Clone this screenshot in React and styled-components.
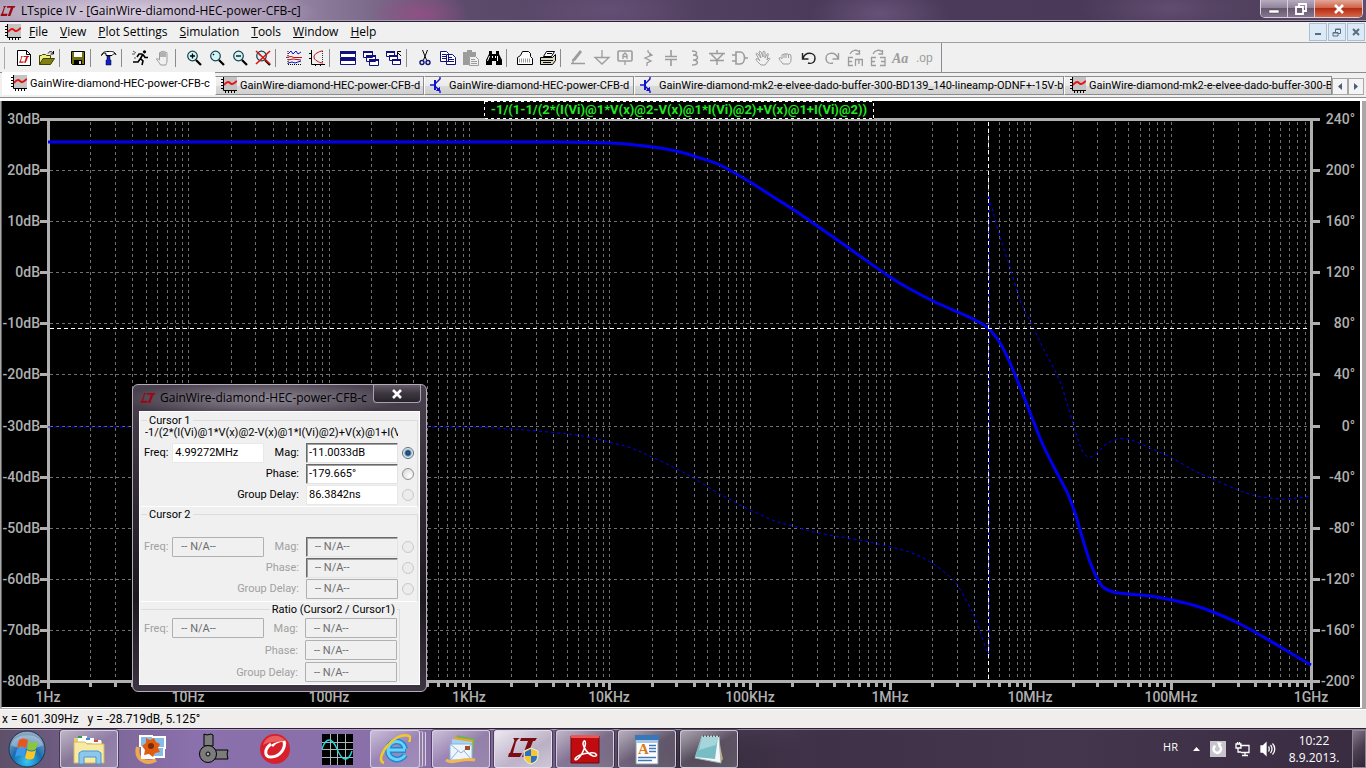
import React from 'react';
import styled, { createGlobalStyle, css } from 'styled-components';

const GlobalStyle = createGlobalStyle`
  * {
    box-sizing: border-box;
  }

  body {
    margin: 0;
    background: #000;
    color: #000;
    font-family: "Open Sans", "Noto Sans", sans-serif;
    font-size: 12px;
  }

  button, input {
    font: inherit;
    color: inherit;
  }
`

const Desktop = styled.div`
  display: flex;
  flex-direction: column;
  min-height: 100vh;
`

const TitleBar = styled.header`
  display: flex;
  align-items: center;
  height: 22px;
  padding: 0 3px 0 0;
  border-bottom: 1px solid #2b2033;
  box-shadow: inset 0 -1px 0 #a99bb2;
  background:
    radial-gradient(ellipse 190px 26px at 130px 12px, rgba(232, 222, 238, 0.8), transparent),
    radial-gradient(ellipse 50px 22px at 420px 14px, rgba(158, 76, 136, 0.7), transparent),
    radial-gradient(ellipse 90px 30px at 610px 10px, rgba(108, 86, 126, 0.6), transparent),
    radial-gradient(ellipse 70px 30px at 880px 14px, rgba(112, 92, 132, 0.7), transparent),
    radial-gradient(ellipse 90px 30px at 1170px 8px, rgba(112, 90, 128, 0.6), transparent),
    linear-gradient(90deg, #a493ae, #9c8aa9 20%, #5d4b6c 34%, #4c3a5a 60%, #4a3957 88%, #5f4d6a);
`

const WindowTitle = styled.h1`
  flex: 1;
  margin: 0 0 0 5px;
  font-size: 12px;
  font-weight: normal;
  line-height: 20px;
`

const CaptionButtons = styled.div`
  display: flex;
  align-self: flex-start;
  height: 18px;
  border: 1px solid #d8cfdd;
  border-top: 0;
  border-radius: 0 0 5px 5px;
  overflow: hidden;
`

const CaptionButton = styled.button`
  display: flex;
  align-items: center;
  justify-content: center;
  width: ${props => props.$close ? 47 : 27}px;
  padding: 0;
  border: 0;
  border-right: ${props => props.$close ? 0 : '1px solid #d8cfdd'};
  background: ${props => props.$close
    ? 'linear-gradient(#e2a697, #cf5f46 48%, #b42d12 50%, #d8664a)'
    : 'linear-gradient(#b7abbf, #8f8199 48%, #67576f 50%, #85768e)'};
`

const MenuBar = styled.nav`
  display: flex;
  align-items: center;
  height: 21px;
  padding: 0 1px 0 4px;
  border-bottom: 1px solid #a0a0a0;
  background: #f0f0f0;

  > svg {
    margin-right: 2px;
  }
`

const MenuItem = styled.button`
  padding: 0 6px;
  border: 0;
  background: none;
  font-size: 12px;
  line-height: 18px;

  &::first-letter {
    text-decoration: underline;
  }
`

const ChildButtons = styled.div`
  display: flex;
  gap: 1px;
  margin-left: auto;
`

const ChildButton = styled.button`
  display: flex;
  align-items: center;
  justify-content: center;
  width: 18px;
  height: 18px;
  padding: 0;
  border: 1px solid #a9bfd5;
  background: #dce9f6;
`

const Toolbar = styled.div`
  display: flex;
  align-items: center;
  height: 30px;
  padding-left: 4px;
  border-bottom: 1px solid #8c8c8c;
  background: #f0f0f0;
`

const ToolGroup = styled.div`
  display: flex;
  flex: none;
  align-items: center;

  & + & {
    padding-left: 7px;
    border-left: 1px solid #8c8c8c;
  }
`

const Grip = styled.div`
  width: 1px;
  height: 22px;
  margin-right: 8px;
  background: #a8a8a8;
`

const ToolButton = styled.button`
  width: 23px;
  height: 18px;
  padding: 1px 3px;
  border: 0;
  background: none;

  svg {
    display: block;
  }
`

const ToolbarEnd = styled.div`
  width: 1px;
  height: 29px;
  margin-left: 5px;
  background: #8c8c8c;
`

const TabBar = styled.div`
  display: flex;
  align-items: flex-end;
  height: 28px;
  padding: 0 2px 4px;
  border-bottom: 2px solid #fff;
  background: linear-gradient(#f0f0f0 24px, #8c8c8c 24px, #8c8c8c 25px, #fff 25px);
  font-family: Roboto, "Liberation Sans", sans-serif;
`

const Tab = styled.button`
  display: flex;
  flex: 0 ${props => props.$last ? 1 : 0} ${props => props.$width}px;
  align-items: center;
  gap: 3px;
  min-width: 0;
  height: 19px;
  padding: 0 0 0 4px;
  overflow: hidden;
  border: 1px solid #8c8c8c;
  border-left-color: #fff;
  background: linear-gradient(#f2f2f2, #ebebeb 50%, #dbdbdb 52%, #cfcfcf);
  font-size: 11px;
  white-space: nowrap;

  svg {
    flex: none;
  }

  ${props => props.$active && css`
    height: 23px;
    padding: 0 0 0 7px;
    border-color: #fff;
    background: #fff;
  `}
`

const TabScroll = styled.div`
  display: flex;
  margin-left: auto;
`

const ScrollButton = styled.button`
  width: 16px;
  height: 17px;
  padding: 0;
  border: 1px solid #a8a8a8;
  background: #f4f4f4;

  svg {
    display: block;
    margin: auto;
  }
`

const Workspace = styled.main`
  position: relative;
  display: flex;
  flex: 1;
  min-height: 600px;
  border: solid #a8a8a8;
  border-width: 0 4px 1px 1px;
`

const PlotPane = styled.div`
  display: flex;
  flex: 1;
  border: solid #fff;
  border-width: 0 2px 1px 0;
  border-left: 1px solid #606060;
  background: #000;
`

const Plot = styled.svg`
  display: block;
  flex: 1;
  min-width: 0;
  font-family: Roboto, "Liberation Sans", sans-serif;
`

const Dialog = styled.section`
  position: absolute;
  top: 283px;
  left: 131px;
  width: 295px;
  padding: 0 6px 6px;
  border: 1px solid #b4adb8;
  border-radius: 6px;
  background:
    radial-gradient(ellipse 140px 18px at 130px 14px, rgba(150, 143, 156, 0.9), transparent),
    linear-gradient(#4a424f, #2e2832 40%, #1c181f 70%, #3c3441);
  font-family: Roboto, "Liberation Sans", sans-serif;
  font-size: 11px;
`

const DialogTitle = styled.div`
  display: flex;
  height: 26px;
  padding-left: 1px;

  h2 {
    flex: 1;
    margin: 4px 0 0 4px;
    font: 12px/18px "Open Sans", "Noto Sans", sans-serif;
    white-space: nowrap;
  }

  > svg {
    margin-top: 7px;
  }
`

const DialogClose = styled.button`
  display: flex;
  align-items: center;
  justify-content: center;
  width: 48px;
  height: 18px;
  margin-right: -1px;
  padding: 0;
  border: 1px solid #aaa2ae;
  border-top: 0;
  border-radius: 0 0 4px 4px;
  background: linear-gradient(#655d69, #3c3640 50%, #28232b);
`

const DialogBody = styled.form`
  padding: 1px 1px 2px;
  border: 1px solid #fff;
  background: #f0f0f0;
`

const CursorGroup = styled.fieldset`
  min-width: 0;
  height: ${props => props.$height}px;
  margin: 0 ${props => props.$narrow ? 18 : 0}px 0 0;
  padding: 0;
  border: 1px solid #dcdcdc;
  border-left: 0;
  border-bottom-color: ${props => props.$narrow ? 'transparent' : '#fff'};

  legend {
    height: ${props => props.$narrow ? 15 : 14}px;
    margin-left: ${props => props.$narrow ? 'auto' : '6px'};
    margin-right: 2px;
    padding: 0 2px;
    line-height: 15px;
  }
`

const Expression = styled.div`
  width: 253px;
  height: 15px;
  margin-left: 4px;
  overflow: hidden;
  line-height: 11px;
  white-space: nowrap;
`

const Row = styled.div`
  display: flex;
  align-items: center;
  justify-content: flex-end;
  height: ${props => props.$narrow ? 22 : 21}px;
  padding-right: ${props => props.$narrow ? 0 : 3}px;
`

const Field = styled.label`
  display: flex;
  align-items: center;
  gap: ${props => props.$lead ? 4 : 7}px;
  margin: 0 ${props => props.$lead ? 'auto' : props.$narrow ? '2px' : '4px'} 0 ${props => props.$lead ? '3px' : '0'};
  color: ${props => props.$off ? '#a0a0a0' : '#000'};
`

const Value = styled.input`
  width: 92px;
  height: 20px;
  padding: 0 ${props => props.disabled ? 8 : 2}px;
  border: 1px solid ${props => props.disabled ? '#b0b0b0' : '#e8e8e8'};
  border-radius: 1px;
  background: ${props => props.disabled ? '#f0f0f0' : '#fff'};
  color: ${props => props.disabled ? '#6d6d6d' : '#000'};

  ${props => props.$sunken && css`
    border-color: #696969 #e3e3e3 #e3e3e3 #696969;
    box-shadow: inset 1px 1px 0 #a0a0a0;
  `}
`

const Radio = styled.input`
  appearance: none;
  flex: none;
  width: 12px;
  height: 12px;
  margin: 0;
  border: 1px solid #8e8f8f;
  border-radius: 50%;
  background: radial-gradient(circle at 70% 70%, #fff, #d4d4d4);

  &:disabled {
    border-color: #c8c8c8;
    background: #ececec;
  }

  &:checked {
    border-color: #5c6f80;
    background: radial-gradient(circle, #2d6a9c 0, #12406b 2px, #c9dbe8 4px, #f4f4f4 5px);
  }
`

const StatusBar = styled.footer`
  display: flex;
  align-items: center;
  height: 19px;
  padding-left: 2px;
  border-top: 1px solid #fff;
  background: #f0eeed;
  font-family: Roboto, "Liberation Sans", sans-serif;
  white-space: pre;
`

const Taskbar = styled.footer`
  display: flex;
  align-items: center;
  height: 40px;
  border-top: 1px solid #2a2030;
  background:
    radial-gradient(ellipse 110px 40px at 700px 30px, rgba(20, 14, 24, 0.4), transparent),
    linear-gradient(90deg, #5d5068, #7d6798 8%, #8a70ac 14%, #8a70a8 32%, #75618a 40%, #4d4058 50%, #3f3147 60%, #44364d 78%, #392b40 100%);
  box-shadow: inset 0 1px 0 rgba(220, 208, 228, 0.5);
  color: #fff;
`

const StartButton = styled.button`
  width: 60px;
  height: 38px;
  padding: 0 0 0 8px;
  border: 0;
  background: none;

  svg {
    display: block;
  }
`

const TaskButton = styled.button`
  display: flex;
  align-items: center;
  justify-content: center;
  width: 58px;
  height: 38px;
  margin-right: 4px;
  padding: 0;
  border: 1px solid transparent;
  border-radius: 3px;
  background: none;

  ${props => props.$open && css`
    border-color: rgba(235, 228, 240, 0.75);
    background: linear-gradient(150deg, rgba(255, 255, 255, 0.55), rgba(255, 255, 255, 0.15) 50%, rgba(255, 255, 255, 0.2));
    box-shadow: 0 0 0 1px rgba(30, 20, 40, 0.5);
  `}

  ${props => props.$stack && css`
    width: 50px;
    margin-right: 12px;
    box-shadow: 3px 0 0 -1px #8f7ba6, 4px 0 0 -1px #d8cfe0, 7px 0 0 -2px #8f7ba6, 8px 0 0 -2px #d8cfe0;
  `}

  ${props => props.$active && css`
    background: linear-gradient(150deg, rgba(255, 255, 255, 0.85), rgba(255, 255, 255, 0.5) 60%, rgba(255, 255, 255, 0.65));
  `}
`

const Tray = styled.div`
  display: flex;
  align-items: center;
  height: 100%;
  margin-left: auto;
`

const Language = styled.span`
  margin: 0 14px 5px 0;
  font-size: 11px;
`

const TrayIcons = styled.div`
  display: flex;
  align-items: center;
  gap: 9px;
`

const Clock = styled.time`
  width: 76px;
  font-size: 12px;
  line-height: 17px;
  text-align: center;
`

const ShowDesktop = styled.button`
  width: 14px;
  height: 38px;
  border: 1px solid #8f8396;
  background: linear-gradient(135deg, #85788c, #4a3e50 50%, #2f2535);
`

const logoPath = 'M5 0h7c-2 1-3 2-4 4L5 15h9l-2 4H0l1-4h1L6 4c1-2 0-3-1-4zM13 0h16l-2 3h-2l-6 16h-5l6-16h-8z';

const Logo = () => (
  <svg width="16" height="12" viewBox="-1 -2 31 23" fill="#9a0a10">
    <path d={logoPath}/>
  </svg>
)

const GraphIcon = () => (
  <svg width="17" height="17" viewBox="0 0 17 17">
    <path fill="#c4c4c4" d="M3 0h14v13H3z"/>
    <path stroke="#000" fill="none" d="M3.500 0v13.500H17M1 2.500h2M1 5.500h2M1 8.500h2M1 11.500h2M5.500 14v2M8.500 14v2M11.500 14v2M14.500 14v2"/>
    <path stroke="#e81010" strokeWidth="1.800" fill="none" d="M4 8c1-1 2-3 4-3s2 2 4 2 3-2 5-3"/>
  </svg>
)

const TransistorIcon = () => (
  <svg width="17" height="17" viewBox="0 0 17 17" stroke="#1010d0" fill="none">
    <path strokeWidth="2" d="M6 3v10"/>
    <path strokeWidth="1.400" d="M1 8h5M6 7l5-5V0M6 9l5 5v2"/>
    <path fill="#1010d0" d="M7.500 13.500h3v-3z"/>
  </svg>
)

const Lens = ({ children }) => (
  <>
    <circle cx="6.500" cy="6" r="4.800" fill="#d4f4f4" stroke="#104050" strokeWidth="1.200"/>
    <path stroke="#000" strokeWidth="2.200" d="M10 10l5 5"/>
    <path stroke="#000" strokeWidth="1.300" d={children}/>
  </>
)

const G = '#9c9c9c';
const N = '#10107c';

const tools = [
  [
    ['New schematic', <><path fill="#fff" stroke="#000" d="M1.500.500h9l4 4v11h-13z"/><path fill="none" stroke="#000" d="M10.500.500v4h4"/><g fill="#d01010" transform="translate(3 6) scale(.36)"><path d={logoPath}/></g></>],
    ['Open', <><path fill="#f0f080" stroke="#404000" d="M.500 14.500v-9h2l1-1h3l1 1h4v3"/><path fill="#808010" stroke="#404000" d="M.500 14.500l3.500-6h11.500l-4 6z"/><path fill="none" stroke="#000" d="M9 3.500c2-3 4-2 5.500 0M14.500 1v3h-3"/></>],
  ],
  [['Save', <><path fill="#707010" stroke="#000" d="M1.500 1.500h13v13h-12l-1-1z"/><path fill="#fff" d="M4 2h8v5H4z"/><path d="M4 10h8v5H4z"/><path fill="#ddd" d="M9 11h2v3H9z"/></>]],
  [['Control panel', <><path fill="#fff" stroke="#000" d="M.500 5.500c1-4 4-4 8-4 3 0 5 0 6.500 3l-2-1-2 2h-6v-2c-2-1-3 0-4.500 2z"/><path fill="#1020d0" stroke="#000" strokeWidth=".5" d="M6 6h3v4h1v5H5v-5h1z"/></>]],
  [
    ['Run', <><circle cx="12.500" cy="1.800" r="1.600"/><path fill="none" stroke="#000" strokeWidth="1.600" d="M11 4L8.500 8.500l2.500 2.500-1 4M8.500 8.500L6 12H1M10.500 4H7L5 7M11 4.500l2 3h3"/><path stroke="#555" d="M1 1l3 2M0 4h3M2 8h2"/></>],
    ['Halt', <path fill="none" stroke={G} d="M5.500 15c-1-3-4-5-4-6s2 0 3 1V3c0-1 1.500-1 1.500 0v4V2c0-1 2-1 2 0v5-5c0-1 2-1 2 0v5-4c0-1 2-1 2 0v8c0 2-1 3-1 4z"/>],
  ],
  [
    ['Zoom in', <Lens>M4 6h5M6.500 3.500v5</Lens>],
    ['Pan', <Lens>M4 5l1-1</Lens>],
    ['Zoom out', <Lens>M4 6h5</Lens>],
    ['Zoom full', <><Lens>M4 5l1-1</Lens><path stroke="#e01010" strokeWidth="1.600" d="M1 1l14 13M15 1L1 14"/></>],
  ],
  [
    ['Autorange', <><path stroke="#000" fill="none" strokeDasharray="1 1" d="M2 1v14M2 14.500h14"/><path stroke="#1010c0" fill="none" d="M2 4l3-3 2 3 3-3 2 3 3-2M2 13l4-1 3 1 6-2"/><path stroke="#c01010" fill="none" d="M0 7.500l5-1 3 1h8M2 10l5-1 8 1"/></>],
    ['Plot settings', <><path stroke="#000" fill="none" d="M2.500 0v14.500H16M0 3.500h2M0 8.500h2M6.500 14v2M11.500 14v2"/><path stroke="#c01010" fill="none" d="M14 1c-3 0-4 1-6 2-4 2-4 6 0 8 2 1 3 2 6 2"/><path stroke="#333" strokeDasharray="1 1" d="M13.500 1v12"/></>],
  ],
  [
    ['Tile windows', <><path fill="#fff" stroke={N} d="M.500 1.500h15v6H.500zM.500 8.500h15v6H.500z"/><path fill={N} d="M0 1h16v3H0zM0 8h16v3H0z"/></>],
    ['Cascade windows', <><path fill="#fff" stroke={N} d="M.500 1.500h9v6h-9zM3.500 5.500h9v6h-9zM6.500 9.500h9v6h-9z"/><path fill={N} d="M0 1h10v2H0zM3 5h10v2H3zM6 9h10v2H6z"/></>],
    ['Close windows', <><path fill="#fff" stroke={N} d="M.500 1.500h8v5h-8zM3.500 5.500h8v5h-8zM6.500 9.500h8v5h-8z"/><path fill={N} d="M0 1h9v2H0zM3 5h9v2H3zM6 9h9v2H6z"/><path fill="none" stroke="#000" d="M15 6l-4-4M11.500 5V1.500H15"/></>],
  ],
  [
    ['Cut', <><path stroke="#000" fill="none" d="M5.500 0l4 10M10.500 0l-4 10"/><g fill="none" stroke={N} strokeWidth="1.400"><circle cx="5" cy="12.500" r="2"/><circle cx="11" cy="12.500" r="2"/></g></>],
    ['Copy', <><path fill="#fff" stroke={N} d="M.500 1.500h6l2 2v8h-8zM6.500 4.500h6l3 3v7h-9z"/><path stroke={N} d="M2 4.500h4M2 6.500h4M2 8.500h4M8 7.500h4M8 9.500h6M8 11.500h6"/></>],
    ['Paste', <><path fill={G} d="M0 2h4V0h5v2h4v4H6v9H0z"/><path fill="#f0f0f0" stroke={G} d="M6.500 6.500h6l3 3v6h-9z"/><path stroke={G} d="M8 9.500h4M8 11.500h6M8 13.500h6"/></>],
    ['Find', <><path d="M3 1h3v3h4V1h3v3l3 6v5h-6v-4H6v4H0v-5l3-6z"/><path stroke="#fff" fill="none" d="M3.500 6l-2 5M11.500 6v5M6.500 6v2M9.500 6v2"/></>],
  ],
  [
    ['Print preview', <><path fill="#fff" stroke="#000" d="M.500 14.500v-7l3-2 2-4h6l2 2v3l2 2v6z"/><path stroke="#999" strokeWidth="4" strokeDasharray="1 1" d="M2 10.500h12"/></>],
    ['Print', <><path fill="#fff" stroke="#000" d="M3.500 6.500l3-5h8l-3 5z"/><path fill="#d8d8c0" stroke="#000" d="M.500 7.500h12l3-3v6l-3 4H.500z"/><path stroke="#000" d="M1 10.500h12M7 3.500h5M3 12.500h8"/></>],
  ],
  [
    ['Wire', <><path fill={G} d="M1 10L9 0l2 2-7 9z"/><path stroke={G} strokeWidth="1.500" d="M0 13.500h14M2 9v5"/></>],
    ['Ground', <path stroke={G} strokeWidth="1.300" fill="none" d="M8 0v7M1 7.500h14L8 14z"/>],
    ['Label net', <><rect x="1" y="1" width="14" height="10" rx="1" fill="none" stroke={G} strokeWidth="1.600"/><path stroke={G} strokeWidth="1.300" fill="none" d="M6 9V5l2-2 2 2v4M6 6.500h4M8 11v4"/></>],
    ['Resistor', <path stroke={G} strokeWidth="1.300" fill="none" d="M8 0v2l4 3-7 3 6 3-4 2v3M12 5H9"/>],
    ['Capacitor', <path stroke={G} strokeWidth="1.600" fill="none" d="M8 0v6M2 6.500h12M2 9.500h12M8 10v6"/>],
    ['Inductor', <path stroke={G} strokeWidth="1.500" fill="none" d="M6 1c6 0 6 4 1 4 6 0 6 5 0 5 6 0 6 5-1 5"/>],
    ['Diode', <path stroke={G} strokeWidth="1.500" fill="none" d="M8 0v3M8 11v4M0 3.500h16M2 4l6 6 6-6M1 10.500h14"/>],
    ['Component', <path stroke={G} strokeWidth="1.600" fill="none" d="M0 5h4M0 11h4M4 2h4c6 0 6 12 0 12H4zM12 8h4"/>],
    ['Move', <path fill="none" stroke={G} d="M6 15c-3-3-5-4-5-6 1-1 2 0 4 2L1 4c0-1 1-1 2 0l3 4-2-6c0-1 1-1 2 0l2 5V2c0-1 2-1 2 0v6l2-4c1-1 2 0 1 1l-1 5 2-2c1 0 1 1 0 2l-4 5z"/>],
    ['Drag', <path fill="none" stroke={G} d="M5 14c-2-3-4-4-4-6 1-1 2 0 3 1V5c0-1 2-1 2 0 0-2 2-2 2 0 0-2 2-2 2 0 1-1 3-1 3 1v4c0 2-1 3-2 4zM6 5v3M8 5v3M10.500 5v3"/>],
    ['Undo', <path fill="none" stroke="#222" strokeWidth="1.400" d="M1.500 3v6h6M2 8.500C4 1 14 2 14 8c0 5-4 6-7 5"/>],
    ['Redo', <path fill="none" stroke={G} strokeWidth="1.400" d="M14.500 3v6h-6M14 8.500C12 1 2 2 2 8c0 5 4 6 7 5"/>],
    ['Mirror', <path fill="none" stroke={G} strokeWidth="1.300" d="M3 4c2-4 7-5 9-2M12.500 0v4h-4M6 7.500H1.500v8H6M1.500 11.500H5M8.500 16V9.500H16M15.300 9v7M11.900 9.500V14"/>],
    ['Rotate', <path fill="none" stroke={G} strokeWidth="1.300" d="M3 4c2-4 7-5 9-2M12.500 0v4h-4M6 7.500H1.500v8H6M1.500 11.500H5M10 7.500h5v8h-5M11 11.500h4"/>],
    ['Text', <text x="-1" y="13" fontFamily="Liberation Serif, serif" fontSize="14" fontStyle="italic" fontWeight="bold" fill={G}>Aa</text>],
    ['SPICE directive', <text x="0" y="12" fontFamily="Liberation Sans, sans-serif" fontSize="12" fill={G}>.op</text>],
  ],
];

const tabs = [
  { name: 'GainWire-diamond-HEC-power-CFB-c', width: 213, active: true },
  { name: 'GainWire-diamond-HEC-power-CFB-d', width: 209 },
  { name: 'GainWire-diamond-HEC-power-CFB-d', width: 210, schematic: true },
  { name: 'GainWire-diamond-mk2-e-elvee-dado-buffer-300-BD139_140-lineamp-ODNF+-15V-b', width: 430, schematic: true },
  { name: 'GainWire-diamond-mk2-e-elvee-dado-buffer-300-BD', width: 268, last: true },
];

const AXIS = { left: 48, right: 1311, top: 119, bottom: 681 };
const decades = ['1Hz', '10Hz', '100Hz', '1KHz', '10KHz', '100KHz', '1MHz', '10MHz', '100MHz', '1GHz'];
const steps = Array.from({ length: 12 }, (_, i) => i);

const xAt = decade => Math.round(AXIS.left + decade * (AXIS.right - AXIS.left) / 9);
const yAt = step => Math.round(AXIS.top + step * (AXIS.bottom - AXIS.top) / 11);

const magnitude = [
  [48, 142], [300, 142], [500, 142], [560, 142], [609, 143], [635, 145], [660, 148], [680, 152],
  [700, 158], [720, 165], [750, 182], [775, 198], [800, 214], [850, 249], [890, 277], [910, 289], [935, 302],
  [960, 313], [975, 320], [988, 328], [1000, 343], [1010, 363], [1020, 387], [1031, 415], [1043, 445],
  [1057, 473], [1067, 492], [1075, 513], [1083, 540], [1090, 562], [1097, 578], [1103, 587], [1113, 592],
  [1128, 594], [1150, 596], [1172, 600], [1193, 605], [1213, 612], [1238, 623], [1260, 635], [1282, 648], [1311, 665],
];

const phaseLow = [
  [48, 427], [420, 427], [470, 427], [511, 429], [537, 431], [568, 434], [588, 437], [609, 442], [631, 448],
  [652, 457], [677, 469], [695, 479], [716, 492], [731, 500], [750, 510], [775, 521], [793, 526], [818, 533],
  [848, 538], [869, 542], [891, 547], [912, 553], [932, 563], [949, 576], [958, 586], [967, 602], [975, 618], [988, 655],
];

const phaseHigh = [
  [988, 197], [992, 208], [1000, 237], [1010, 267], [1020, 300], [1032, 325], [1043, 348], [1058, 377],
  [1067, 403], [1075, 430], [1082, 450], [1089, 457], [1097, 453], [1105, 445], [1115, 440], [1128, 439],
  [1150, 448], [1172, 458], [1193, 470], [1213, 479], [1238, 490], [1257, 496], [1282, 499], [1297, 498], [1311, 496],
];

// Catmull-Rom through the sample points
const smooth = points => points.slice(1).reduce((path, p, i) => {
  const a = points[Math.max(i - 1, 0)];
  const b = points[i];
  const c = points[Math.min(i + 2, points.length - 1)];
  return `${path}C${b[0] + (p[0] - a[0]) / 6},${b[1] + (p[1] - a[1]) / 6} ${p[0] - (c[0] - b[0]) / 6},${p[1] - (c[1] - b[1]) / 6} ${p[0]},${p[1]}`;
}, `M${points[0]}`);

const BodePlot = () => (
  <Plot viewBox="2 101 1358 606" role="img" aria-label="Gain and phase against frequency">
    <g stroke="#707070" strokeDasharray="3 3" shapeRendering="crispEdges">
      {decades.slice(0, -1).map((_, d) => [2, 3, 4, 5, 6, 7, 8, 9, 10].map(m => (
        <path key={`${d}-${m}`} d={`M${xAt(d + Math.log10(m))}.5 122V680`}/>
      )))}
      {steps.slice(1, -1).map(i => <path key={i} d={`M50 ${yAt(i)}.5H1310`}/>)}
    </g>
    <g stroke="#b0b0b0" fill="none" shapeRendering="crispEdges">
      <path strokeWidth="3" d="M40 119.500H1320M40 681.500H1320M48.500 119V689M1311.500 119V689"/>
      {steps.map(i => <path key={i} strokeWidth="3" d={`M40 ${yAt(i)}.5H48M1312 ${yAt(i)}.5H1320`}/>)}
      {decades.slice(0, -1).map((_, d) => [2, 3, 4, 5, 6, 7, 8, 9, 10].map(m => (
        <path key={`${d}-${m}`} strokeWidth="3" d={`M${xAt(d + Math.log10(m))}.5 682v${m === 10 ? 8 : 5}`}/>
      )))}
    </g>
    <g fill="#b0b0b0" fontSize="14" fontWeight="500">
      {steps.map(i => <text key={i} x="40" y={yAt(i) + 5} textAnchor="end">{30 - i * 10}dB</text>)}
      {steps.map(i => <text key={i} x="1355" y={yAt(i) + 5} textAnchor="end">{240 - i * 40}°</text>)}
      {decades.map((label, i) => <text key={label} x={xAt(i)} y="702" textAnchor="middle">{label}</text>)}
    </g>
    <g fill="none" stroke="#0000ff" strokeDasharray="3 3">
      <path d={smooth(phaseLow)}/>
      <path d={smooth(phaseHigh)}/>
      <path d="M989.500 197V655"/>
    </g>
    <path fill="none" stroke="#0000f0" strokeWidth="3" d={smooth(magnitude)}/>
    <path fill="none" stroke="#fff" strokeDasharray="4 3" shapeRendering="crispEdges" d="M50 328.500H1310M988.500 122V680"/>
    <rect x="484.500" y="101.500" width="389" height="17" fill="#000" stroke="#fff" strokeDasharray="3 3" shapeRendering="crispEdges"/>
    <text x="679" y="114" fill="#20e820" fontSize="13" fontWeight="700" textAnchor="middle">
      -1/(1-1/(2*(I(Vi)@1*V(x)@2-V(x)@1*I(Vi)@2)+V(x)@1+I(Vi)@2))
    </text>
  </Plot>
)

const CursorRow = ({ name, label, value = '-- N/A--', freq, sunken, off, radio = true, checked, radioOff }) => (
  <Row $narrow={!radio}>
    {freq && (
      <Field $lead $off={off}>Freq:<Value defaultValue={freq} disabled={off}/></Field>
    )}
    <Field $off={off} $narrow={!radio}>{label}:<Value defaultValue={value} disabled={off} $sunken={sunken}/></Field>
    {radio && (
      <Radio type="radio" name={name} aria-label={`${name} ${label}`} defaultChecked={checked} disabled={radioOff}/>
    )}
  </Row>
)

const CursorDialog = () => (
  <Dialog>
    <DialogTitle>
      <Logo/>
      <h2>GainWire-diamond-HEC-power-CFB-c</h2>
      <DialogClose aria-label="Close">
        <svg width="12" height="10" viewBox="0 0 12 10"><path stroke="#fff" strokeWidth="2.600" d="M2 1l8 8M10 1L2 9"/></svg>
      </DialogClose>
    </DialogTitle>
    <DialogBody>
      <CursorGroup $height={94}>
        <legend>Cursor 1</legend>
        <Expression>-1/(2*(I(Vi)@1*V(x)@2-V(x)@1*I(Vi)@2)+V(x)@1+I(Vi)</Expression>
        <CursorRow name="Cursor 1" label="Mag" freq="4.99272MHz" value="-11.0033dB" sunken checked/>
        <CursorRow name="Cursor 1" label="Phase" value="-179.665°" sunken/>
        <CursorRow name="Cursor 1" label="Group Delay" value="86.3842ns" radioOff/>
      </CursorGroup>
      <CursorGroup $height={95}>
        <legend>Cursor 2</legend>
        <Expression/>
        <CursorRow name="Cursor 2" label="Mag" freq="-- N/A--" sunken off radioOff/>
        <CursorRow name="Cursor 2" label="Phase" sunken off radioOff/>
        <CursorRow name="Cursor 2" label="Group Delay" off radioOff/>
      </CursorGroup>
      <CursorGroup $height={80} $narrow>
        <legend>Ratio (Cursor2 / Cursor1)</legend>
        <CursorRow label="Mag" freq="-- N/A--" off radio={false}/>
        <CursorRow label="Phase" off radio={false}/>
        <CursorRow label="Group Delay" off radio={false}/>
      </CursorGroup>
    </DialogBody>
  </Dialog>
)

const StartOrb = () => (
  <svg width="38" height="38" viewBox="0 0 38 38">
    <defs>
      <radialGradient id="orb" cx="50%" cy="85%" r="80%">
        <stop offset="0" stopColor="#38c8f4"/>
        <stop offset=".5" stopColor="#186cae"/>
        <stop offset="1" stopColor="#8fa9c0"/>
      </radialGradient>
    </defs>
    <circle cx="19" cy="19" r="18" fill="url(#orb)" stroke="#1d3550"/>
    <path fill="#fff" opacity=".3" d="M3 15C6 2 32 2 35 15c-8 5-24 5-32 0z"/>
    <path fill="#e8561c" d="M11 10c3-2 6-2 9 0l-2 8c-3-2-6-2-9 0z"/>
    <path fill="#8cc63c" d="M21 11c3 2 6 2 9 0l-2 8c-3 2-6 2-9 0z"/>
    <path fill="#3c9ae8" d="M9 19c3-2 6-2 9 0l-2 8c-3-2-6-2-9 0z"/>
    <path fill="#fcc624" d="M19 20c3 2 6 2 9 0l-2 8c-3 2-6 2-9 0z"/>
  </svg>
)

const TaskIcon = ({ children }) => <svg width="32" height="32" viewBox="0 0 32 32">{children}</svg>

const tasks = [
  { name: 'Windows Explorer', open: true, icon: <><path fill="#e6cf74" d="M1 5h11l2 3h15v22H1z"/><path fill="#fff" d="M5 3h9v6H5zM12 5h9v5h-9zM19 7h9v5h-9z"/><path fill="#2aa04a" d="M5 3h4v2H5z"/><path fill="#3a8cd8" d="M13 5h4v2h-4z"/><path fill="#d04a30" d="M21 7h4v2h-4z"/><path fill="#f8eaa4" stroke="#d4b85c" d="M1 9h11l2 2h17v19H1z"/><path fill="#8cc8ee" stroke="#4a96cc" d="M6 31V20l3-2h16l3 2v11h-5v-7H11v7z"/></> },
  { name: 'Photo Gallery', icon: <><path fill="none" stroke="#f0a850" strokeWidth="4" d="M3 14C0 26 10 32 21 27"/><path fill="#fff" d="M4 2h14v12H4zM14 3h17v13H14zM6 13h14v13H6zM17 14h13v11H17z"/><path fill="#88bce8" d="M6 4h11v9H6zM16 5h13v9H16zM19 15h9v8h-9z"/><path fill="#e05c10" d="M11 5l4 2 4-2 2 4 4 2-2 4 2 4-5 1-2 4-4-3-5 1 1-5-3-4 4-3z"/><circle cx="16" cy="13" r="3" fill="#782c08"/></> },
  { name: 'Pipe tool', icon: <g fill="#7c7c7c" stroke="#000"><path d="M7 13V1l3 1 4-1 2 1v11z"/><path d="M18 17h13l-1 4 1 5H18z"/><circle cx="11" cy="21" r="8.500"/><circle cx="11" cy="21" r="2" fill="#aaa"/></g> },
  { name: 'Antivirus', icon: <><circle cx="16" cy="16" r="15" fill="#d8202c"/><path fill="#f07870" opacity=".7" d="M4 12C8 0 24 0 28 11 20 8 12 8 4 12z"/><path fill="none" stroke="#fff" strokeWidth="3" d="M12 11c-7 5-7 13 0 13 9 0 15-9 13-16"/><path fill="#fff" d="M12 12c4-3 9-4 14-4-5 1-9 2-12 6z"/></> },
  { name: 'Oscilloscope', icon: <><path fill="#000" d="M1 1h31v31H1z"/><path stroke="#a8b8b8" d="M9.500 1v31M16.500 1v31M24.500 1v31M1 9.500h31M1 16.500h31M1 24.500h31"/><path fill="none" stroke="#28d8d8" strokeWidth="1.400" d="M1 16C5 4 11 4 16 16s11 14 15 2"/></> },
  { name: 'Internet Explorer', open: true, stack: true, icon: <><path fill="none" stroke="#188cd4" strokeWidth="6" d="M27 17H9M26 22c-4 7-17 6-17-5 0-10 15-12 17-1"/><path fill="none" stroke="#6cd0f8" strokeWidth="3" d="M26 17H9c0-10 15-12 17-1M26 22c-4 7-17 6-17-5"/><path fill="none" stroke="#f4c828" strokeWidth="2.500" d="M5 30C-6 27 16-3 30 3c2 1 1 4 0 6"/></> },
  { name: 'Windows Live Mail', open: true, icon: <><path fill="#68b850" d="M12 2l18 4-3 18-18-4z"/><path fill="#f0a030" d="M9 4l19 3-2 18-19-3z"/><path fill="#a4d4f4" d="M7 6l20 3-2 18-19-3z"/><path fill="#eef6fc" stroke="#88b4dc" d="M5 11h22v16H5z"/><path fill="none" stroke="#88b4dc" d="M5 11l11 9 11-9M5 27l8-9M27 27l-8-9"/><path fill="#a05028" d="M20 13h5v4h-5z"/><path fill="none" stroke="#f0b850" strokeWidth="3" d="M1 27c8 5 16-3 29 0"/></> },
  { name: 'LTspice IV', open: true, active: true, icon: <><path fill="#7c0c14" transform="translate(1 5)" d={logoPath}/><path fill="#f4c830" stroke="#e8eef4" d="M24 15l7 3v5c0 4-3 7-7 8-4-1-7-4-7-8v-5z"/><path fill="#2870c8" d="M24 16v7h-6v-4zM24 23h6c0 4-2 6-6 7z"/></> },
  { name: 'Adobe Reader', open: true, icon: <><path fill="#c00c10" stroke="#700408" d="M2 3h28v27H2z"/><path fill="#e85858" d="M2 2h28v3H2z"/><path fill="none" stroke="#fff" strokeWidth="1.500" d="M15 8c-3 3 2 12 9 15 6 1 4-4-3-3-7 0-14 3-15 6 0 3 7-2 10-13 1-4 0-6-1-5z"/></> },
  { name: 'WordPad', open: true, icon: <><path fill="#fff" stroke="#8898b0" d="M5 3h22v28H5z"/><path fill="#3878b8" d="M4 2h24v5H4z"/><path fill="#a8c8e8" d="M5 7h22v3H5z"/><text x="7" y="21" fontFamily="Liberation Serif, serif" fontSize="15" fontWeight="bold" fill="#e07818">A</text><path stroke="#4078b8" strokeWidth="1.300" d="M18 12.500h7M18 15.500h7M18 18.500h7M7 24.500h18M7 27.500h14"/></> },
  { name: 'Notepad', open: true, icon: <><path fill="#c8a468" d="M25 4l5 22-3 4z"/><path fill="#f4f8f8" stroke="#a0b4b8" d="M9 3h17l2 27-26-5z"/><path fill="#78bcc4" d="M9 4h16l-3 22-20-2z"/><path fill="#b8e0e4" opacity=".7" d="M9 4h16l-2 8-17 5z"/><path stroke="#555" strokeWidth="2" strokeDasharray="1 2" d="M10 3h16"/></> },
];

const App = () => (
  <Desktop>
    <GlobalStyle/>
    <TitleBar>
      <Logo/>
      <WindowTitle>LTspice IV - [GainWire-diamond-HEC-power-CFB-c]</WindowTitle>
      <CaptionButtons>
        <CaptionButton aria-label="Minimize"><svg width="12" height="12"><path fill="#fff" stroke="#444" strokeWidth=".5" d="M1 7h10v3H1z"/></svg></CaptionButton>
        <CaptionButton aria-label="Restore"><svg width="12" height="12" fill="none" stroke="#fff" strokeWidth="1.800"><path d="M4 4V1h7v7H8M1 4h7v7H1z"/></svg></CaptionButton>
        <CaptionButton $close aria-label="Close"><svg width="12" height="10"><path stroke="#fff" strokeWidth="2.600" d="M2 1l8 8M10 1L2 9"/></svg></CaptionButton>
      </CaptionButtons>
    </TitleBar>
    <MenuBar>
      <GraphIcon/>
      {['File', 'View', 'Plot Settings', 'Simulation', 'Tools', 'Window', 'Help'].map(item => (
        <MenuItem key={item}>{item}</MenuItem>
      ))}
      <ChildButtons>
        <ChildButton aria-label="Minimize window"><svg width="8" height="8"><path stroke="#5c6c80" strokeWidth="2" d="M1 6h6"/></svg></ChildButton>
        <ChildButton aria-label="Restore window"><svg width="10" height="9" fill="none" stroke="#5c6c80"><path d="M3.500 4V1h5v4.500H6M1 4.500h5v3.500H1zM3 1.500h6M1 5h5"/></svg></ChildButton>
        <ChildButton aria-label="Close window"><svg width="8" height="8"><path stroke="#5c6c80" strokeWidth="2" d="M1 1l6 6M7 1L1 7"/></svg></ChildButton>
      </ChildButtons>
    </MenuBar>
    <Toolbar>
      <Grip/>
      {tools.map((group, i) => (
        <ToolGroup key={i}>
          {group.map(([name, drawing]) => (
            <ToolButton key={name} aria-label={name}>
              <svg width="16" height="16" viewBox="0 0 16 16" overflow="visible">{drawing}</svg>
            </ToolButton>
          ))}
        </ToolGroup>
      ))}
      <ToolbarEnd/>
    </Toolbar>
    <TabBar>
      {tabs.map((tab, i) => (
        <Tab key={i} $width={tab.width} $active={tab.active} $last={tab.last}>
          {tab.schematic ? <TransistorIcon/> : <GraphIcon/>}
          {tab.name}
        </Tab>
      ))}
      <TabScroll>
        <ScrollButton aria-label="Scroll tabs left"><svg width="6" height="7"><path fill="#4c5c78" d="M5 0v7L1 3.500z"/></svg></ScrollButton>
        <ScrollButton aria-label="Scroll tabs right"><svg width="6" height="7"><path fill="#4c5c78" d="M1 0v7l4-3.500z"/></svg></ScrollButton>
      </TabScroll>
    </TabBar>
    <Workspace>
      <PlotPane>
        <BodePlot/>
      </PlotPane>
      <CursorDialog/>
    </Workspace>
    <StatusBar>x = 601.309Hz   y = -28.719dB, 5.125°</StatusBar>
    <Taskbar>
      <StartButton aria-label="Start"><StartOrb/></StartButton>
      {tasks.map(task => (
        <TaskButton key={task.name} aria-label={task.name} $open={task.open} $stack={task.stack} $active={task.active}>
          <TaskIcon>{task.icon}</TaskIcon>
        </TaskButton>
      ))}
      <Tray>
        <Language>HR</Language>
        <TrayIcons>
          <svg width="9" height="6"><path fill="#fff" d="M1 5h7L4.500 1z"/></svg>
          <svg width="16" height="16"><path fill="#c8c4cc" d="M0 0h16v16H0z"/><path fill="none" stroke="#fff" strokeWidth="2.500" d="M5 4.500c-4 6 2 9 5 6 2-2 1-5-1-6"/><path fill="#fff" d="M7 1l5 1-3 4z"/></svg>
          <svg width="16" height="16" fill="none" stroke="#fff" strokeWidth="1.300"><path d="M5 4.500h9v7H6M7 14.500h6M10 12v2M3 7v4h3M1 3h5v4H1zM2.500 1v2M4.500 1v2"/></svg>
          <svg width="16" height="16" fill="none" stroke="#fff" strokeWidth="1.300"><path fill="#fff" d="M1 5h2l3-3v12l-3-3H1z"/><path d="M8.500 5.500c1 1 1 4 0 5M10.500 4c2 2 2 6 0 8M12.500 2.500c3 3 3 8 0 11"/></svg>
        </TrayIcons>
        <Clock>10:22<br/>8.9.2013.</Clock>
        <ShowDesktop aria-label="Show desktop"/>
      </Tray>
    </Taskbar>
  </Desktop>
)

export default App;
